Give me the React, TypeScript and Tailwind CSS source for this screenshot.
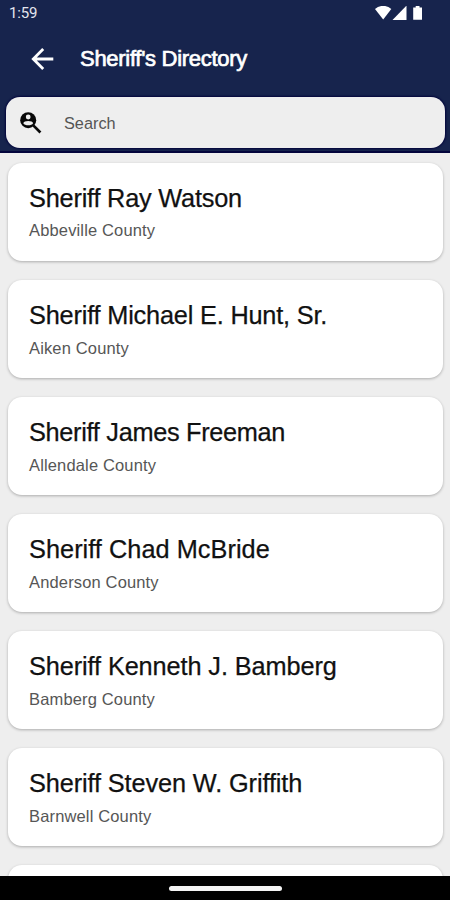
const sheriffs = [
  { name: 'Sheriff Ray Watson', county: 'Abbeville County', tracking: 'tracking-[-0.2px]' },
  { name: 'Sheriff Michael E. Hunt, Sr.', county: 'Aiken County', tracking: 'tracking-[-0.18px]' },
  { name: 'Sheriff James Freeman', county: 'Allendale County', tracking: 'tracking-[-0.3px]' },
  { name: 'Sheriff Chad McBride', county: 'Anderson County', tracking: 'tracking-[0.04px]' },
  { name: 'Sheriff Kenneth J. Bamberg', county: 'Bamberg County', tracking: 'tracking-[-0.1px]' },
  { name: 'Sheriff Steven W. Griffith', county: 'Barnwell County', tracking: 'tracking-[-0.11px]' },
];

function StatusBar() {
  return (
    <div className="flex h-[27px] items-center justify-between pl-[9px] pr-[27px] text-white">
      <span className="font-['Roboto',sans-serif] text-[15px] leading-[27px] tracking-[-0.2px] text-[#e4e6ee]">1:59</span>
      <svg className="h-[16px] w-[48px]" viewBox="0 0 48 16" fill="currentColor">
        <path d="M0 3C4.6 -1.2 11.8 -1.2 16.3 3L8.2 13.5Z" />
        <path d="M31.5 -0.4V13.9H17.5Z" />
        <path d="M40.7 0h3.8v1.5h2.5v12.3h-8.8V1.5h2.5Z" />
      </svg>
    </div>
  );
}

function SearchBox() {
  return (
    <div className="ml-[6px] mr-[5px] flex h-[51px] items-center rounded-[14px] bg-[#eeeeee] pl-[14px] shadow-[0_0_2px_1px_#03053c]">
      <svg className="h-[22px] w-[22px]" viewBox="0 0 22 22" fill="none">
        <circle cx="8.2" cy="8.2" r="8" fill="#080808" />
        <circle cx="8.2" cy="5" r="2.4" fill="#eeeeee" />
        <path d="M3.3 11.2C3.6 8.1 12.8 8.1 13.1 11.2C11.6 14 4.8 14 3.3 11.2Z" fill="#eeeeee" />
        <path d="M13.3 13.4L20.4 20.5" stroke="#080808" strokeWidth="2.7" />
      </svg>
      <span className="ml-[22px] text-[16.3px] leading-5 text-[#555555]">Search</span>
    </div>
  );
}

function SheriffCard({ name, county, tracking }: { name: string; county: string; tracking: string }) {
  return (
    <div className="h-[98.5px] shrink-0 rounded-[14px] bg-white pl-[21px] pt-[20px] shadow-[0_1px_3px_rgba(0,0,0,0.28)]">
      <div className={`whitespace-nowrap text-[25.3px] leading-[31px] text-[#111111] [-webkit-text-stroke:0.25px_#111111] ${tracking}`}>{name}</div>
      <div className="mt-[6.95px] whitespace-nowrap text-[16.5px] leading-5 tracking-[0.15px] text-[#565656]">{county}</div>
    </div>
  );
}

export default function App() {
  return (
    <div className="flex h-[900px] w-[450px] flex-col overflow-hidden bg-[#eeeeee] font-['Liberation_Sans',Arial,sans-serif]">
      <header className="h-[152.5px] shrink-0 border-b-2 border-[#03053c] bg-[#17244d]">
        <StatusBar />
        <div className="flex h-[70px] items-center pb-[7px] pl-[31px] text-white">
          <svg className="h-[22px] w-[23px]" viewBox="0 0 23 22" fill="none" stroke="currentColor" strokeWidth="2.8">
            <path d="M22.3 11H2.3M12.2 1.1L2.3 11L12.2 20.9" />
          </svg>
          <h1 className="ml-[26px] whitespace-nowrap text-[22px] font-normal tracking-[-0.29px] [-webkit-text-stroke:0.7px_white]">Sheriff's Directory</h1>
        </div>
        <SearchBox />
      </header>
      <main className="flex min-h-0 flex-1 flex-col gap-[18.6px] overflow-hidden pl-[8px] pr-[7px] pt-[10px]">
        {sheriffs.map((s) => (
          <SheriffCard key={s.name} name={s.name} county={s.county} tracking={s.tracking} />
        ))}
        <div className="h-[98.5px] shrink-0 rounded-[14px] bg-white shadow-[0_1px_3px_rgba(0,0,0,0.28)]" />
      </main>
      <footer className="flex h-[24px] shrink-0 items-center justify-center bg-black">
        <div className="h-[5px] w-[113px] rounded-full bg-[#f4f4f4]" />
      </footer>
    </div>
  );
}
